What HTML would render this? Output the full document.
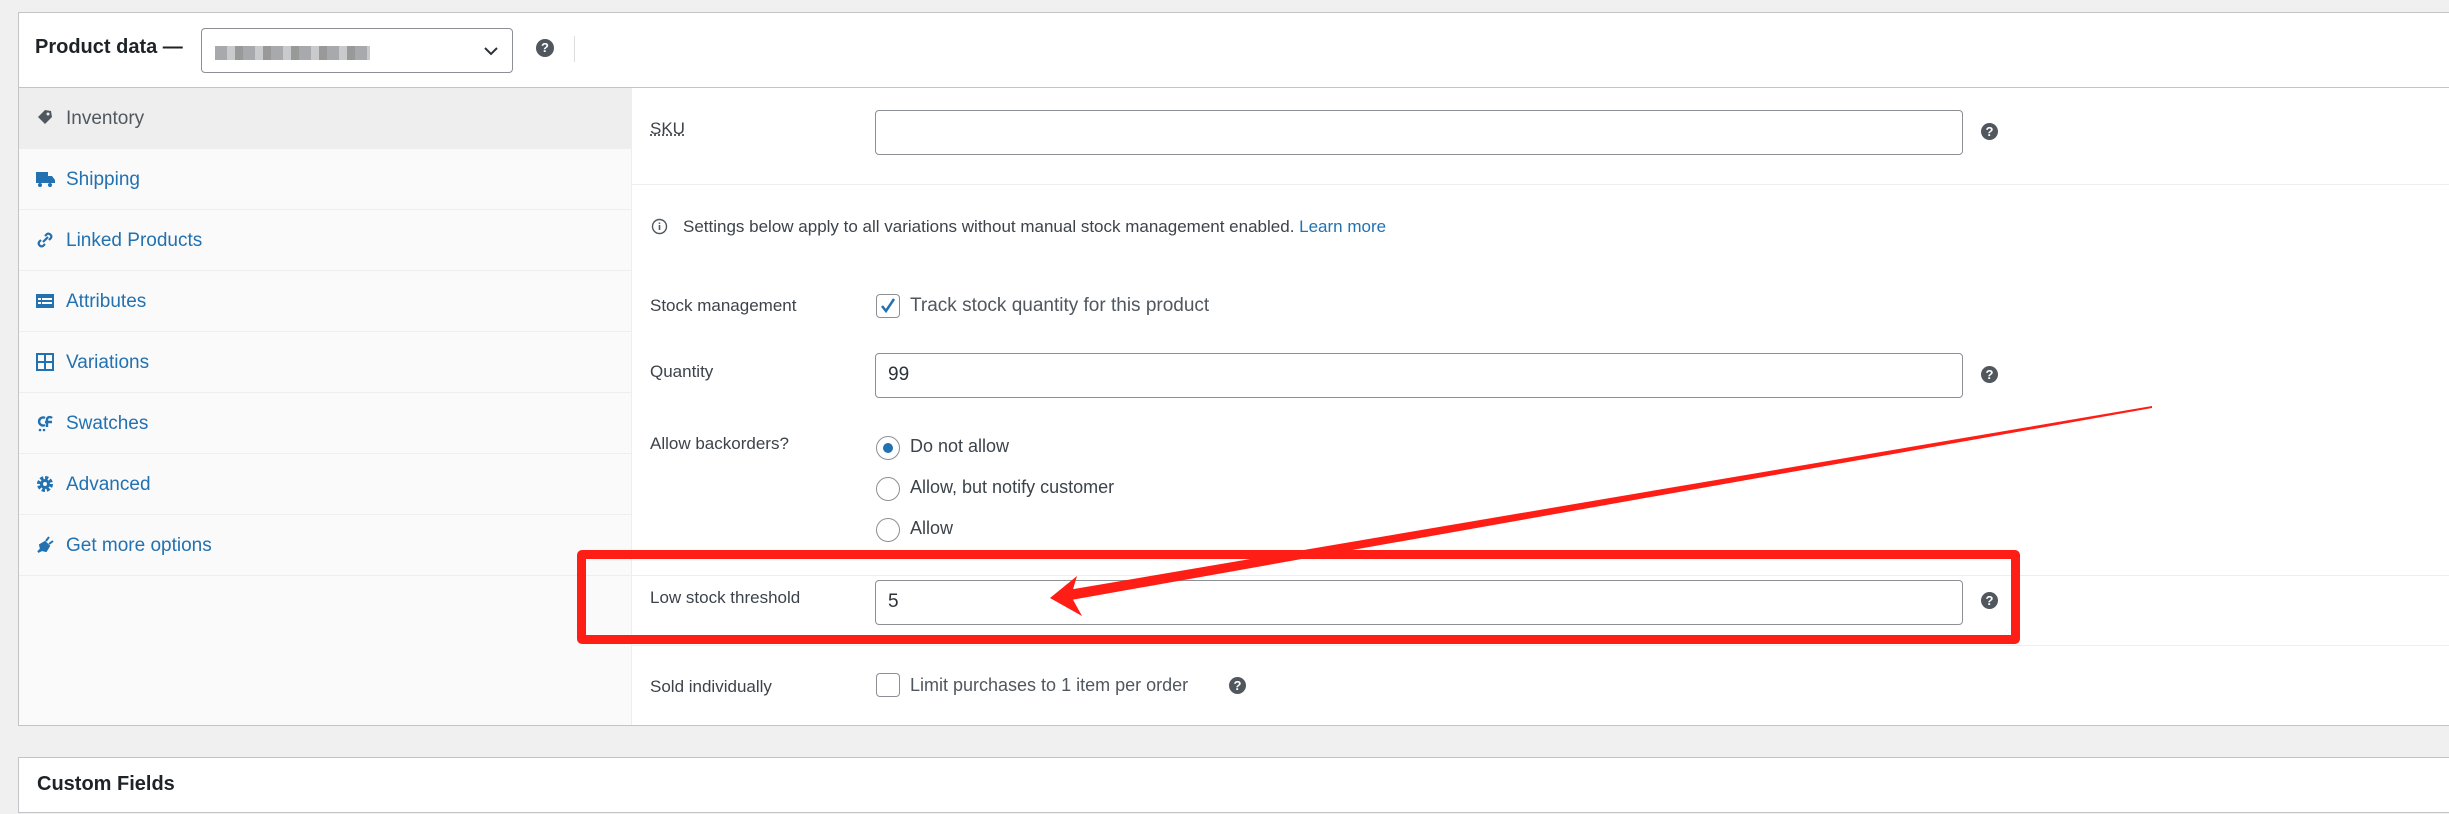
<!DOCTYPE html>
<html><head><meta charset="utf-8"><style>
*{box-sizing:border-box;margin:0;padding:0}
body{width:2449px;height:814px;background:#f0f0f1;font-family:"Liberation Sans",sans-serif;color:#3c434a;position:relative;overflow:hidden}
.abs{position:absolute}
.panel{left:18px;top:12px;width:2440px;height:714px;background:#fff;border:1px solid #c3c4c7}
.hdr{left:19px;top:13px;width:2430px;height:75px;border-bottom:1px solid #c3c4c7}
.side{left:19px;top:88px;width:613px;height:637px;background:#fafafa;border-right:1px solid #eee}
.item{position:absolute;left:0;width:613px;height:61px;border-bottom:1px solid #eee;font-size:19px;color:#2271b1;padding-left:47px;line-height:61px}
.item svg{position:absolute;left:16px;top:20px}
.lbl{font-size:17px;color:#3c434a}
.inp{border:1.5px solid #8c8f94;border-radius:4px;background:#fff;height:45px;width:1088px;left:875px;font-size:19px;padding-left:12px;line-height:42px;color:#2c3338}
.help{width:17px;height:17px;border-radius:50%;background:#50575e;color:#fff;font-size:13px;font-weight:bold;text-align:center;line-height:17px}
.cb{width:24px;height:24px;border:1.5px solid #8c8f94;border-radius:4px;background:#fff}
.rd{width:24px;height:24px;border:1.5px solid #8c8f94;border-radius:50%;background:#fff}
.line{height:1px;background:#eee;left:632px;width:1817px}
.opt{font-size:18px;color:#3c434a}
</style></head><body>
<div class="abs panel"></div>
<div class="abs hdr"></div>
<div class="abs" style="left:35px;top:36px;font-size:20px;font-weight:bold;color:#1d2327">Product data —</div>
<div class="abs" style="left:201px;top:28px;width:312px;height:45px;border:1.5px solid #8c8f94;border-radius:4px;background:#fff"></div>
<div class="abs" style="left:215px;top:46px;width:155px;height:14px;background:repeating-linear-gradient(90deg,#a7a9ac 0 12px,#c9cacc 12px 20px,#999 20px 28px)"></div>
<svg class="abs" style="left:483px;top:45px" width="16" height="12"><path d="M2 3l6 6 6-6" fill="none" stroke="#2c3338" stroke-width="2"/></svg>
<div class="abs help" style="left:536px;top:39px;width:18px;height:18px">?</div>
<div class="abs" style="left:574px;top:36px;width:1px;height:26px;background:#ddd"></div>

<div class="abs side">
<div class="item" style="top:0;background:#eee;color:#50575e">Inventory<svg width="20" height="20" viewBox="0 0 20 20"><path d="M3 9l7-7 6 1 1 6-7 7z" fill="#50575e"/><circle cx="13" cy="6" r="1.5" fill="#eee"/></svg></div>
<div class="item" style="top:61px">Shipping<svg width="20" height="20" viewBox="0 0 20 20"><rect x="1" y="3" width="12" height="11" fill="#2271b1"/><path d="M13 7h4l3 4v3h-7z" fill="#2271b1"/><circle cx="5" cy="16" r="2" fill="#2271b1"/><circle cx="15" cy="16" r="2" fill="#2271b1"/></svg></div>
<div class="item" style="top:122px">Linked Products<svg width="20" height="20" viewBox="0 0 20 20"><path d="M8 12l5-5M6 10l-2 2a3 3 0 0 0 4 4l2-2M14 10l2-2a3 3 0 0 0-4-4l-2 2" fill="none" stroke="#2271b1" stroke-width="2.2"/></svg></div>
<div class="item" style="top:183px">Attributes<svg width="20" height="20" viewBox="0 0 20 20"><rect x="1" y="3" width="18" height="14" fill="#2271b1"/><rect x="3" y="7" width="3" height="2" fill="#fff"/><rect x="7" y="7" width="10" height="2" fill="#fff"/><rect x="3" y="11" width="3" height="2" fill="#fff"/><rect x="7" y="11" width="10" height="2" fill="#fff"/></svg></div>
<div class="item" style="top:244px">Variations<svg width="20" height="20" viewBox="0 0 20 20"><path d="M2 2h16v16H2zM10 2v16M2 10h16" fill="none" stroke="#2271b1" stroke-width="2"/></svg></div>
<div class="item" style="top:305px">Swatches<svg width="20" height="20" viewBox="0 0 20 20"><path d="M10 5a4 4 0 1 0 0 7M12 14V6a3 3 0 0 1 5-1M10 9h7" fill="none" stroke="#2271b1" stroke-width="2.4"/><circle cx="5" cy="17" r="1.3" fill="#2271b1"/><circle cx="9" cy="17" r="1.3" fill="#2271b1"/></svg></div>
<div class="item" style="top:366px">Advanced<svg width="20" height="20" viewBox="0 0 20 20"><circle cx="10" cy="10" r="6" fill="none" stroke="#2271b1" stroke-width="4" stroke-dasharray="3 1.7"/><circle cx="10" cy="10" r="5" fill="#2271b1"/><circle cx="10" cy="10" r="2" fill="#fafafa"/></svg></div>
<div class="item" style="top:427px">Get more options<svg width="20" height="20" viewBox="0 0 20 20"><path d="M3 17l3-3 -1-4 5-3 4 4-3 5-4-1z M11 6l3-4M14 9l4-3" fill="#2271b1" stroke="#2271b1" stroke-width="2"/></svg></div>
</div>

<div class="abs lbl" style="left:650px;top:119px;text-decoration:underline dotted">SKU</div>
<div class="abs inp" style="top:110px"></div>
<div class="abs help" style="left:1981px;top:123px">?</div>
<div class="abs line" style="top:184px"></div>

<svg class="abs" style="left:651px;top:218px" width="17" height="17"><circle cx="8.5" cy="8.5" r="7" fill="none" stroke="#50575e" stroke-width="1.4"/><path d="M8.5 7v5M8.5 4.5v1.4" stroke="#50575e" stroke-width="1.6"/></svg>
<div class="abs lbl" style="left:683px;top:217px">Settings below apply to all variations without manual stock management enabled. <span style="color:#2271b1">Learn more</span></div>

<div class="abs lbl" style="left:650px;top:296px">Stock management</div>
<div class="abs cb" style="left:876px;top:294px"></div>
<svg class="abs" style="left:878px;top:296px" width="20" height="20"><path d="M4 10l4 5 8-12" fill="none" stroke="#2271b1" stroke-width="2.5"/></svg>
<div class="abs" style="left:910px;top:295px;font-size:19px;color:#50575e">Track stock quantity for this product</div>

<div class="abs lbl" style="left:650px;top:362px">Quantity</div>
<div class="abs inp" style="top:353px">99</div>
<div class="abs help" style="left:1981px;top:366px">?</div>

<div class="abs lbl" style="left:650px;top:434px">Allow backorders?</div>
<div class="abs rd" style="left:876px;top:436px"></div>
<div class="abs" style="left:883px;top:443px;width:10px;height:10px;border-radius:50%;background:#2271b1"></div>
<div class="abs opt" style="left:910px;top:436px">Do not allow</div>
<div class="abs rd" style="left:876px;top:477px"></div>
<div class="abs opt" style="left:910px;top:477px">Allow, but notify customer</div>
<div class="abs rd" style="left:876px;top:518px"></div>
<div class="abs opt" style="left:910px;top:518px">Allow</div>
<div class="abs line" style="top:575px"></div>

<div class="abs lbl" style="left:650px;top:588px">Low stock threshold</div>
<div class="abs inp" style="top:580px">5</div>
<div class="abs help" style="left:1981px;top:592px">?</div>
<div class="abs line" style="top:645px"></div>

<div class="abs lbl" style="left:650px;top:677px">Sold individually</div>
<div class="abs cb" style="left:876px;top:673px"></div>
<div class="abs opt" style="left:910px;top:675px;color:#50575e">Limit purchases to 1 item per order</div>
<div class="abs help" style="left:1229px;top:677px">?</div>

<div class="abs" style="left:577px;top:550px;width:1443px;height:94px;border:9px solid #ff1e16;border-radius:5px"></div>
<svg class="abs" style="left:0;top:0" width="2449" height="814">
<polygon points="2152,406 1068,590 1071,600 2152,408" fill="#ff1e16"/>
<polygon points="1050,598 1077,576 1071,596 1082,616" fill="#ff1e16"/>
</svg>

<div class="abs" style="left:18px;top:757px;width:2440px;height:56px;background:#fff;border:1px solid #c3c4c7"></div>
<div class="abs" style="left:37px;top:773px;font-size:20px;font-weight:bold;color:#1d2327">Custom Fields</div>
</body></html>
